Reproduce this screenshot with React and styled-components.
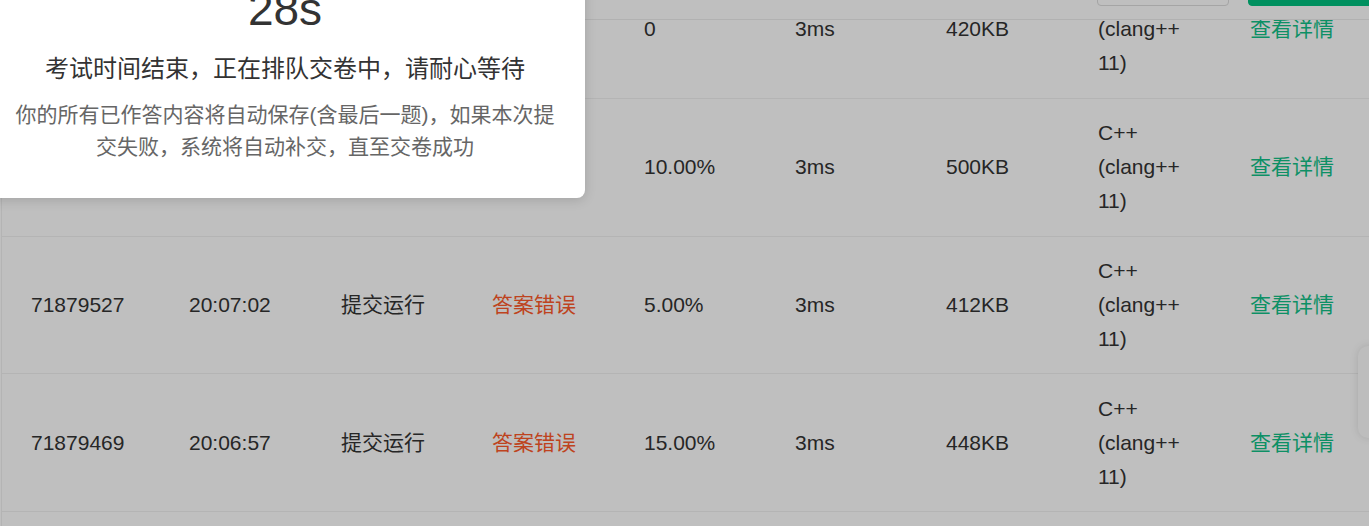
import React from 'react';
import styled, { createGlobalStyle } from 'styled-components';

const GlobalStyle = createGlobalStyle`
  html, body {
    margin: 0;
    padding: 0;
    background: #fff;
  }
  body {
    font-family: "Liberation Sans", "Noto Sans CJK SC", sans-serif;
    color: #333;
  }
`;

const Page = styled.div`
  position: relative;
  width: 1369px;
  height: 526px;
  overflow: hidden;
  background: #fff;
`;

const Table = styled.div`
  margin: -39px 0 0 1px;
  border-left: 1px solid #f0f0f0;
`;

const Row = styled.div`
  display: grid;
  grid-template-columns: 158px 152px 151px 152px 151px 151px 152px 152px 1fr;
  align-items: center;
  border-bottom: 1px solid #f0f0f0;
`;

const Cell = styled.div`
  padding: 17.4px 27px 17.4px 29px;
  font-size: 21px;
  line-height: 34px;
  color: ${p => (p.$status === 'wrong' ? '#fe5a2a' : '#333')};
`;

const Link = styled.a`
  color: #12c187;
  text-decoration: none;
  cursor: pointer;
`;

const TopBar = styled.div`
  position: absolute;
  top: 0;
  left: 0;
  right: -11px;
  height: 20px;
  box-sizing: border-box;
  background: #fff;
  border-bottom: 1px solid #ececec;
  display: flex;
  justify-content: flex-end;
  align-items: flex-end;
  gap: 19px;
  padding-bottom: 13px;
`;

const Button = styled.button`
  flex: none;
  width: 132px;
  height: 40px;
  border-radius: 4px;
  font-family: inherit;
  font-size: 18px;
  border: 1px solid ${p => (p.$primary ? '#00c17f' : '#dcdcdc')};
  background: ${p => (p.$primary ? '#00c17f' : '#fff')};
  color: ${p => (p.$primary ? '#fff' : '#333')};
`;

const SideTab = styled.div`
  position: absolute;
  top: 346px;
  right: -30px;
  width: 41px;
  height: 92px;
  border-radius: 10px;
  background: #fcfcfc;
  box-shadow: 0 0 8px rgba(0, 0, 0, 0.12);
`;

const Mask = styled.div`
  position: absolute;
  inset: 0;
  background: rgba(0, 0, 0, 0.25);
`;

const Dialog = styled.div`
  position: absolute;
  top: -60px;
  left: -15px;
  width: 600px;
  box-sizing: border-box;
  padding: 41px 25px 35px;
  background: #fff;
  border-radius: 8px;
  box-shadow: 0 2px 12px rgba(0, 0, 0, 0.15);
  text-align: center;
`;

const Timer = styled.div`
  font-size: 46px;
  line-height: 56px;
  color: #333;
`;

const Title = styled.div`
  margin-top: 16px;
  font-size: 24px;
  line-height: 32px;
  color: #333;
`;

const Desc = styled.div`
  margin-top: 14px;
  font-size: 21px;
  line-height: 32px;
  color: #666;
`;

const records = [
  { id: '71879602', time: '20:07:31', type: '提交运行', status: '答案错误', score: '0', cost: '3ms', mem: '420KB' },
  { id: '71879571', time: '20:07:15', type: '提交运行', status: '答案错误', score: '10.00%', cost: '3ms', mem: '500KB' },
  { id: '71879527', time: '20:07:02', type: '提交运行', status: '答案错误', score: '5.00%', cost: '3ms', mem: '412KB' },
  { id: '71879469', time: '20:06:57', type: '提交运行', status: '答案错误', score: '15.00%', cost: '3ms', mem: '448KB' },
  { id: '71879401', time: '20:06:40', type: '提交运行', status: '答案错误', score: '0', cost: '3ms', mem: '416KB' },
];

const App = () => (
  <Page>
    <GlobalStyle />
    <Table>
      {records.map(r => (
        <Row key={r.id}>
          <Cell>{r.id}</Cell>
          <Cell>{r.time}</Cell>
          <Cell>{r.type}</Cell>
          <Cell $status="wrong">{r.status}</Cell>
          <Cell>{r.score}</Cell>
          <Cell>{r.cost}</Cell>
          <Cell>{r.mem}</Cell>
          <Cell>C++ (clang++ 11)</Cell>
          <Cell>
            <Link>查看详情</Link>
          </Cell>
        </Row>
      ))}
    </Table>
    <TopBar>
      <Button>保存</Button>
      <Button $primary>提交</Button>
    </TopBar>
    <SideTab />
    <Mask />
    <Dialog>
      <Timer>28s</Timer>
      <Title>考试时间结束，正在排队交卷中，请耐心等待</Title>
      <Desc>你的所有已作答内容将自动保存(含最后一题)，如果本次提交失败，系统将自动补交，直至交卷成功</Desc>
    </Dialog>
  </Page>
);

export default App;
